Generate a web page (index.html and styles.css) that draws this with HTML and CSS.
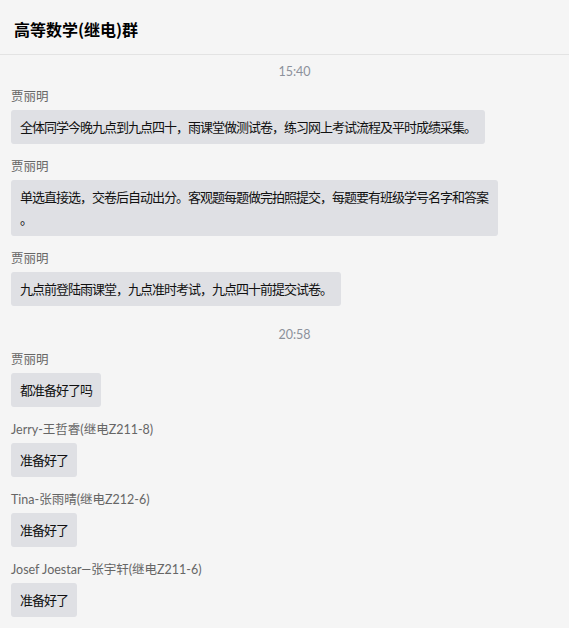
FILE: index.html
```html
<!DOCTYPE html>
<html lang="zh-CN">
<head>
  <meta charset="UTF-8" />
  <meta name="viewport" content="width=device-width, initial-scale=1.0"/>
  <title>高等数学(继电)群</title>
  <link rel="stylesheet" href="styles.css">
</head>
<body>
  <div class="chat">
    <div class="chat-header">
      <h2>高等数学(继电)群</h2>
    </div>

    <div class="messages">
      <div class="time">15:40</div>

      <div class="msg">
        <div class="name">贾丽明</div>
        <div class="bubble">全体同学今晚九点到九点四十，雨课堂做测试卷，练习网上考试流程及平时成绩采集。</div>
      </div>

      <div class="msg">
        <div class="name">贾丽明</div>
        <div class="bubble">单选直接选，交卷后自动出分。客观题每题做完拍照提交，每题要有班级学号名字和答案。</div>
      </div>

      <div class="msg">
        <div class="name">贾丽明</div>
        <div class="bubble">九点前登陆雨课堂，九点准时考试，九点四十前提交试卷。</div>
      </div>

      <div class="time">20:58</div>

      <div class="msg">
        <div class="name">贾丽明</div>
        <div class="bubble">都准备好了吗</div>
      </div>

      <div class="msg">
        <div class="name">Jerry-王哲睿(继电Z211-8)</div>
        <div class="bubble">准备好了</div>
      </div>

      <div class="msg">
        <div class="name">Tina-张雨晴(继电Z212-6)</div>
        <div class="bubble">准备好了</div>
      </div>

      <div class="msg">
        <div class="name">Josef Joestar—张宇轩(继电Z211-6)</div>
        <div class="bubble">准备好了</div>
      </div>
    </div>
  </div>
</body>
</html>
```

FILE: styles.css
```css
* {
  margin: 0;
  padding: 0;
  box-sizing: border-box;
}

body, html {
  height: 100%;
  width: 100%;
  font-family: Lato, "Noto Sans CJK SC", sans-serif;
  background-color: #f5f5f5;
  color: #111;
  overflow: hidden;
}

.chat-header {
  height: 55px;
  display: flex;
  align-items: center;
  padding: 3px 14px 0 14px;
  border-bottom: 1px solid #e3e3e3;
}

.chat-header h2 {
  font-size: 16px;
  font-weight: bold;
  color: #000;
  font-family: "Noto Sans CJK SC", sans-serif;
}

.messages {
  padding: 3px 11px 0 11px;
}

.time {
  text-align: center;
  padding: 6px 0 9px 20px;
  font-size: 12.5px;
  line-height: 16px;
  color: #8c919b;
}

.msg {
  margin-bottom: 15px;
}

.name {
  font-size: 12.5px;
  line-height: 16px;
  color: #666;
  margin-bottom: 5px;
}

.bubble {
  display: inline-block;
  max-width: 487px;
  background: #dfe0e4;
  border-radius: 3px;
  padding: 6px 9px;
  font-size: 13px;
  letter-spacing: -1px;
  line-height: 22px;
  color: #111;
  font-family: "Noto Sans CJK SC", sans-serif;
  line-break: anywhere;
}
```
